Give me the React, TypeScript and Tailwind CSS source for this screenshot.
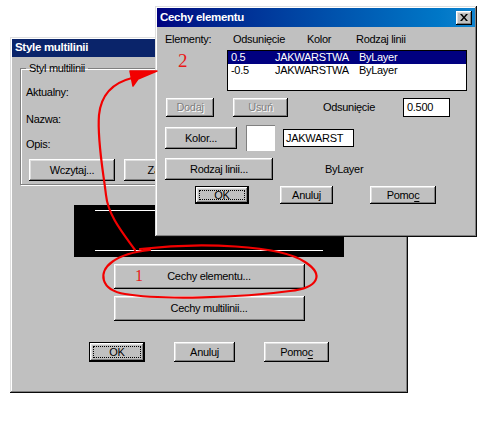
import type { ReactNode } from "react";

// Win98-style bevels
const raised =
  "bg-[#c0c0c0] shadow-[inset_-1px_-1px_#000,inset_1px_1px_#fff,inset_-2px_-2px_#808080,inset_2px_2px_#dfdfdf]";
const windowFrame =
  "bg-[#c0c0c0] shadow-[inset_-1px_-1px_#0a0a0a,inset_1px_1px_#dfdfdf,inset_-2px_-2px_#808080,inset_2px_2px_#fff]";
const uiFont = "font-['Liberation_Sans',Arial,sans-serif] text-[11px] tracking-[-0.3px] text-black";

function Btn({
  children,
  className = "",
  disabled = false,
}: {
  children: ReactNode;
  className?: string;
  disabled?: boolean;
}) {
  return (
    <button
      className={`flex shrink-0 items-center justify-center ${raised} ${
        disabled ? "text-[#808080] [text-shadow:1px_1px_0_#fff]" : "text-black"
      } ${className}`}
    >
      {children}
    </button>
  );
}

function DefaultBtn({ children, className = "" }: { children: ReactNode; className?: string }) {
  return (
    <button
      className={`flex shrink-0 border border-black p-[3px] ${raised} ${className}`}
    >
      <span className="flex h-full w-full items-center justify-center border border-dotted border-black">
        {children}
      </span>
    </button>
  );
}

function Pomoc() {
  return (
    <span>
      Pomo<span className="underline underline-offset-2">c</span>
    </span>
  );
}

function CloseBox() {
  return (
    <div className={`flex h-[14px] w-[16px] items-center justify-center ${raised}`}>
      <svg width="8" height="7" viewBox="0 0 8 7">
        <path d="M0 0h2l2 2.5L6 0h2L5 3.5 8 7H6L4 4.5 2 7H0l3-3.5z" fill="#000" />
      </svg>
    </div>
  );
}

function StyleWindow() {
  return (
    <div className={`absolute left-[10px] top-[37px] flex h-[356px] w-[398px] flex-col p-[2px] ${windowFrame}`}>
      <div className="flex h-[18px] items-center bg-[#0a246a] px-[3px] font-['Liberation_Sans',Arial,sans-serif] text-[11.5px] font-bold text-white">
        Style multilinii
      </div>

      <fieldset className="mx-[8px] mt-[4px] h-[124px] border border-[#808080] px-[5px] shadow-[1px_1px_0_#fff,inset_1px_1px_0_#fff]">
        <legend className="px-[3px] leading-[14px]">Styl multilinii</legend>
        <div className="mt-[10px] flex flex-col">
          <div className="h-[14px] leading-[14px]">Aktualny:</div>
          <div className="mt-[13px] h-[14px] leading-[14px]">Nazwa:</div>
          <div className="mt-[11px] h-[14px] leading-[14px]">Opis:</div>
          <div className="ml-[3px] mt-[8px] flex gap-[9px]">
            <Btn className="h-[22px] w-[86px]">Wczytaj...</Btn>
            <Btn className="h-[22px] w-[86px]">Zapisz...</Btn>
            <Btn className="h-[22px] w-[86px]">Dodaj</Btn>
          </div>
        </div>
      </fieldset>

      {/* podgląd multilinii */}
      <div className="mx-auto mt-[20px] flex h-[52px] w-[270px] flex-col justify-between bg-black px-[21px] pb-[6px] pt-[5px]">
        <div className="h-px bg-white" />
        <div className="h-px bg-white" />
      </div>

      <Btn className="mx-auto mt-[7px] h-[25px] w-[191px]">Cechy elementu...</Btn>
      <Btn className="mx-auto mt-[7px] h-[25px] w-[191px]">Cechy multilinii...</Btn>

      <div className="mt-[21px] flex justify-center gap-[29px]">
        <DefaultBtn className="h-[20px] w-[56px]">OK</DefaultBtn>
        <Btn className="h-[20px] w-[61px]">Anuluj</Btn>
        <Btn className="h-[20px] w-[65px]">
          <Pomoc />
        </Btn>
      </div>
    </div>
  );
}

const elements = [
  { offset: "0.5", color: "JAKWARSTWA", type: "ByLayer" },
  { offset: "-0.5", color: "JAKWARSTWA", type: "ByLayer" },
];

function ElementWindow() {
  return (
    <div className={`absolute left-[155px] top-[6px] flex h-[231px] w-[322px] flex-col p-[2px] ${windowFrame}`}>
      <div className="flex h-[19px] items-center justify-between bg-gradient-to-r from-[#000080] to-[#1084d0] pl-[3px] pr-[3px] font-['Liberation_Sans',Arial,sans-serif] text-[11.5px] font-bold text-white">
        <span>Cechy elementu</span>
        <CloseBox />
      </div>

      <div className="flex flex-col pl-[8px]">
        <div className="mt-[5px] flex h-[14px] leading-[14px]">
          <span className="w-[68px]">Elementy:</span>
          <span className="w-[74px]">Odsunięcie</span>
          <span className="w-[49px]">Kolor</span>
          <span>Rodzaj linii</span>
        </div>

        <div className="ml-[62px] mt-[4px] h-[41px] w-[240px] border border-black bg-white">
          {elements.map((el, i) => (
            <div
              key={i}
              className={`flex h-[13px] items-center pl-[3px] leading-[13px] ${
                i === 0 ? "bg-[#000080] text-white" : "text-black"
              }`}
            >
              <span className="w-[44px]">{el.offset}</span>
              <span className="w-[84px]">{el.color}</span>
              <span>{el.type}</span>
            </div>
          ))}
        </div>

        <div className="mt-[7px] flex h-[19px] items-center">
          <Btn disabled className="ml-[1px] h-[19px] w-[48px]">Dodaj</Btn>
          <Btn disabled className="ml-[19px] h-[19px] w-[55px]">Usuń</Btn>
          <span className="ml-[35px] w-[80px]">Odsunięcie</span>
          <div className="flex h-[19px] w-[47px] items-center border border-black bg-white pl-[3px]">0.500</div>
        </div>

        <div className="mt-[8px] flex h-[26px] items-center">
          <Btn className="h-[22px] w-[72px]">Kolor...</Btn>
          <div className="ml-[9px] h-[26px] w-[29px] border-l border-t border-[#808080] bg-white" />
          <div className="ml-[8px] flex h-[18px] w-[71px] items-center border border-black bg-white pl-[2px]">
            JAKWARST
          </div>
        </div>

        <div className="mt-[7px] flex h-[22px] items-center">
          <Btn className="h-[22px] w-[108px]">Rodzaj linii...</Btn>
          <span className="ml-[52px]">ByLayer</span>
        </div>

        <div className="mt-[6px] flex">
          <DefaultBtn className="ml-[30px] h-[18px] w-[54px]">OK</DefaultBtn>
          <Btn className="ml-[31px] h-[18px] w-[53px]">Anuluj</Btn>
          <Btn className="ml-[37px] h-[18px] w-[66px]">
            <Pomoc />
          </Btn>
        </div>
      </div>
    </div>
  );
}

// czerwone oznaczenia narysowane odręcznie
function Markup() {
  return (
    <div className="pointer-events-none absolute inset-0">
      <svg className="absolute inset-0" width="482" height="425" viewBox="0 0 482 425">
        <g fill="none" stroke="#f20000" strokeWidth="2.2" strokeLinecap="round" strokeLinejoin="round">
          <path d="M135 250 C122 232 108 215 106 195 C103 170 97 140 99 115 C101 95 112 83 132 78" />
          <path d="M140 249 C200 242 280 245 305 262 C325 275 318 288 290 291 C240 298 160 300 125 294 C100 290 98 272 112 262 C120 256 130 252 150 250" />
        </g>
        <path d="M157 71 L130 71 L133 86 L138 79 Z" fill="#f20000" stroke="#f20000" strokeWidth="1.5" strokeLinejoin="round" />
      </svg>
      <span className="absolute left-[178px] top-[49px] font-['Liberation_Serif',serif] text-[19px] leading-[24px] text-[#e81818]">
        2
      </span>
      <span className="absolute left-[135px] top-[266px] font-['Liberation_Serif',serif] text-[16px] leading-[20px] text-[#e81818]">
        1
      </span>
    </div>
  );
}

export default function App() {
  return (
    <div className={`relative h-[425px] w-[482px] overflow-hidden bg-white ${uiFont}`}>
      <StyleWindow />
      <ElementWindow />
      <Markup />
    </div>
  );
}
